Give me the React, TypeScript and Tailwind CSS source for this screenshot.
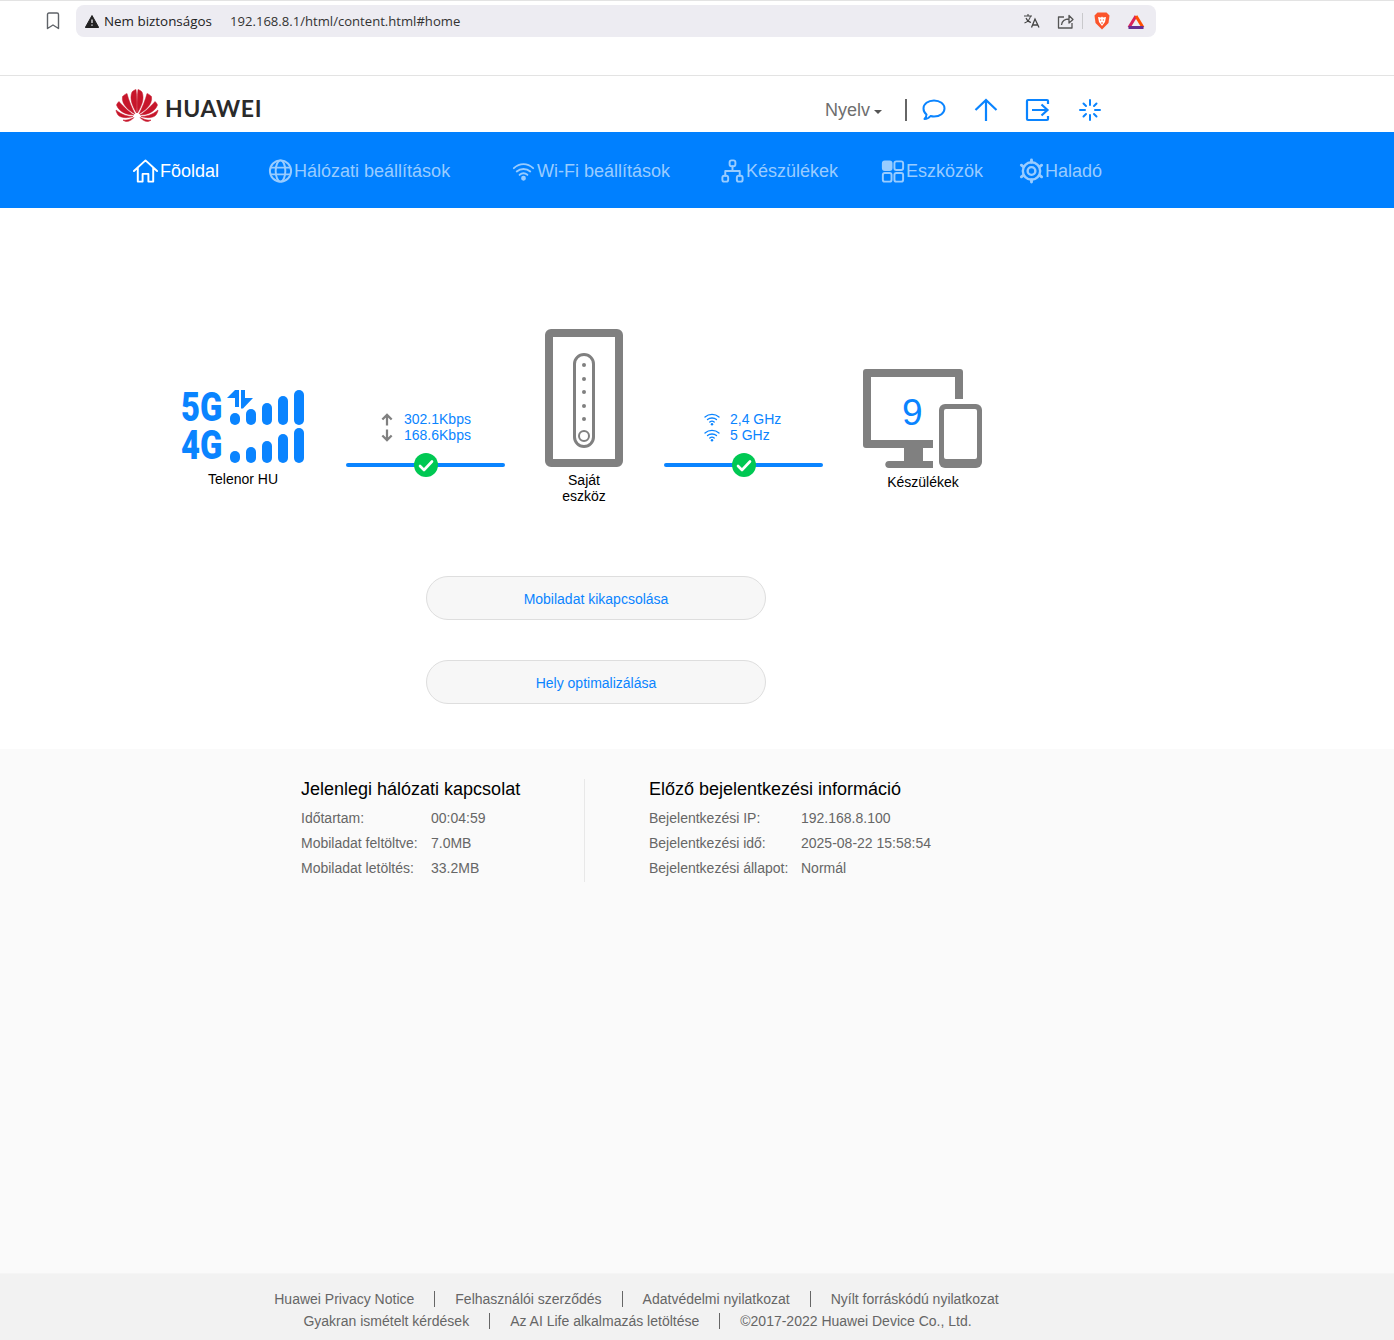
import React from 'react';

const blue = '#0a84ff';

const HuaweiLogo = () => (
  <svg width="44" height="34" viewBox="0 0 44 34" fill="#c7162b" stroke="#c7162b" strokeWidth="0.5">
    <path d="M17 3C19 1 20 1 21 0.5C22 8 22 17 21.6 24C18 18 14 10 17 3Z" />
    <path d="M27 3C25 1 24 1 23 0.5C22 8 22 17 22.4 24C26 18 30 10 27 3Z" />
    <path d="M7.5 7.5C9 6 10.500 5 12 4.500C13.500 11 17 19 20 25C15 22 6 16 7.500 7.500Z" />
    <path d="M36.500 7.500C35 6 33.500 5 32 4.500C30.500 11 27 19 24 25C29 22 38 16 36.500 7.500Z" />
    <path d="M1.500 16C2 14.500 3 13.500 4 12.500C7 16 13 22 19 26C12 26 4 23 1.500 16Z" />
    <path d="M42.500 16C42 14.500 41 13.500 40 12.500C37 16 31 22 25 26C32 26 40 23 42.500 16Z" />
    <path d="M1 21C7 26 13 27.500 18 27.500C14 29 6 29.500 3 26C2 24.500 1 22.500 1 21Z" />
    <path d="M43 21C37 26 31 27.500 26 27.500C30 29 38 29.500 41 26C42 24.500 43 22.500 43 21Z" />
    <path d="M8 31C11 31.500 15 30.500 19 28.500C16 32 11 34 8 31Z" />
    <path d="M36 31C33 31.500 29 30.500 25 28.500C28 32 33 34 36 31Z" />
  </svg>
);

const NavIcon = ({ children }: { children: React.ReactNode }) => (
  <svg width="27" height="26" viewBox="0 0 28 26" fill="none" stroke="currentColor" strokeWidth="2" strokeLinejoin="round" strokeLinecap="round">
    {children}
  </svg>
);

const navItems = [
  {
    label: 'Hálózati beállítások',
    cls: 'ml-[48px] w-[243px]',
    icon: (
      <>
        <circle cx="14" cy="13" r="11" />
        <ellipse cx="14" cy="13" rx="5" ry="11" />
        <path d="M4 9.500H24M4 16.500H24" />
      </>
    ),
  },
  {
    label: 'Wi-Fi beállítások',
    cls: 'w-[209px]',
    icon: (
      <>
        <path d="M4 10C10 4.500 18 4.500 24 10M7 13.500C11 10 17 10 21 13.500M10 17C12.500 15 15.500 15 18 17" />
        <circle cx="14" cy="20.500" r="1.500" fill="currentColor" />
      </>
    ),
  },
  {
    label: 'Készülékek',
    cls: 'w-[160px]',
    icon: (
      <>
        <rect x="11" y="2" width="6" height="6" rx="2" />
        <rect x="3.500" y="18" width="6" height="6" rx="2" />
        <rect x="18.500" y="18" width="6" height="6" rx="2" />
        <path d="M14 8V13M6.500 18V13H21.500V18" />
      </>
    ),
  },
  {
    label: 'Eszközök',
    cls: 'w-[139px]',
    icon: (
      <>
        <rect x="4" y="3" width="9" height="9" rx="2" fill="currentColor" />
        <rect x="16" y="3" width="9" height="9" rx="2" />
        <rect x="4" y="15" width="9" height="9" rx="2" />
        <rect x="16" y="15" width="9" height="9" rx="2" />
      </>
    ),
  },
  {
    label: 'Haladó',
    cls: '',
    icon: (
      <>
        <circle cx="14" cy="13" r="9" strokeWidth="2.500" />
        <circle cx="14" cy="13" r="4" strokeWidth="2.500" />
        <path d="M14 1.500V4M14 22V24.500M3.500 7L5.500 8.500M22.500 17.500L24.500 19M3.500 19L5.500 17.500M22.500 8.500L24.500 7" strokeWidth="3" />
      </>
    ),
  },
];

const SmallWifi = () => (
  <svg width="16" height="13" viewBox="0 0 16 13" fill="none" stroke={blue} strokeWidth="1.300" strokeLinecap="round">
    <path d="M1 4C5 0.500 11 0.500 15 4M3.500 6.500C6 4.500 10 4.500 12.500 6.500M5.800 9C7 8 9 8 10.200 9" />
    <circle cx="8" cy="11.300" r="1.200" fill={blue} stroke="none" />
  </svg>
);

const StatusLine = () => (
  <div className="relative ml-px h-1 w-[159px] rounded-full bg-[#0a84ff]">
    <div className="absolute left-[68px] top-[-10px] flex h-6 w-6 items-center justify-center rounded-full bg-[#00c853]">
      <svg width="16" height="13" viewBox="0 0 16 13" fill="none" stroke="#fff" strokeWidth="2.600" strokeLinecap="round" strokeLinejoin="round">
        <path d="M2 7L6 11L14 2.500" />
      </svg>
    </div>
  </div>
);

const Bars = () => (
  <div className="ml-px flex items-end gap-[6px]">
    <div className="h-[12px] w-[10px] rounded-full bg-[#0a84ff]" />
    <div className="h-[16px] w-[10px] rounded-full bg-[#0a84ff]" />
    <div className="h-[22px] w-[10px] rounded-full bg-[#0a84ff]" />
    <div className="h-[29px] w-[10px] rounded-full bg-[#0a84ff]" />
    <div className="h-[35px] w-[10px] rounded-full bg-[#0a84ff]" />
  </div>
);

const InfoRow = ({ label, value, w }: { label: string; value: string; w: string }) => (
  <div className="flex h-[25px] items-center text-sm text-[#666]">
    <span className={w}>{label}</span>
    <span>{value}</span>
  </div>
);

export default function App() {
  return (
    <div className="flex min-h-[1340px] flex-col bg-white font-['Liberation_Sans',Arial,sans-serif]">
      {/* browser bar */}
      <div className="h-[76px] border-y border-[#e3e3e3]">
        <div className="flex items-center pt-1">
          <svg className="ml-[46px]" width="14" height="18" viewBox="0 0 14 18" fill="none" stroke="#5f6368" strokeWidth="1.400" strokeLinejoin="round">
            <path d="M1.500 2.500C1.500 1.500 2 1 3 1H11C12 1 12.500 1.500 12.500 2.500V16.500L7 13L1.500 16.500Z" />
          </svg>
          <div className="ml-[16px] flex h-8 w-[1080px] items-center rounded-lg bg-[#edecf2] pl-[9px] font-['Open_Sans',sans-serif] text-[#3c3c43]">
            <svg width="14" height="13" viewBox="0 0 14 13">
              <path d="M7 0.500L13.700 12.500H0.300Z" fill="#222" stroke="#222" strokeLinejoin="round" />
              <path d="M7 4.500V8M7 9.500V10.800" stroke="#edecf2" strokeWidth="1.300" />
            </svg>
            <span className="ml-[5px] w-[126px] text-[13.4px] text-[#222]">Nem biztonságos</span>
            <span className="mt-[2px] text-[13.1px] text-[#333]">192.168.8.1/html/content.html#home</span>
            <div className="ml-auto flex items-center">
              <svg width="18" height="16" viewBox="0 0 18 16" fill="none" stroke="#444" strokeWidth="1.100">
                <path d="M1 3H9M5 1V3M7.500 3C7 6 4 9 1.500 10M3 5C4 7.500 6 9 8 9.500" />
                <path d="M8.500 14.500L12 6L16 14.500M10 12H14.500" strokeWidth="1.300" />
              </svg>
              <svg className="ml-[16px]" width="17" height="16" viewBox="0 0 17 16" fill="none" stroke="#555" strokeWidth="1.300" strokeLinejoin="round">
                <path d="M7 4H1.500V15H15V10" />
                <path d="M4.500 12C5 8 8 6 12 6V2.500L16 6.500L12 10V6" />
              </svg>
              <div className="ml-[8px] h-4 w-px bg-[#c9c9cc]" />
              <svg className="ml-[11px]" width="16" height="18" viewBox="0 0 16 18">
                <path d="M3.500 0.500H12.500L15.500 3.500L14.500 11L8 17.500L1.500 11L0.500 3.500Z" fill="#fb542b" />
                <path d="M4 5L7 5.500L8 4.500L9 5.500L12 5L11 10L8 14L5 10Z" fill="#fff" />
                <path d="M6 8H7.200M8.800 8H10M7 11H9" stroke="#fb542b" />
              </svg>
              <svg className="ml-[17px] mr-[11px]" width="18" height="16" viewBox="0 0 18 16" fill="none" strokeWidth="3">
                <path d="M9 3L2 14.500" stroke="#d9235c" />
                <path d="M9 3L16 14.500" stroke="#ff5000" />
                <path d="M1.500 14.500H16.500" stroke="#662d91" />
              </svg>
            </div>
          </div>
        </div>
      </div>

      {/* header */}
      <div className="flex h-[56px] items-center">
        <div className="ml-[115px] mt-[4px] flex items-center">
          <HuaweiLogo />
          <span className="ml-[6px] mt-[4px] font-['Lato',sans-serif] text-[23px] font-bold leading-none tracking-[0.6px] text-[#2a2a2a]">HUAWEI</span>
        </div>
        <div className="ml-[563px] mt-[12px] flex items-center">
          <span className="text-lg text-[#6e6e6e]">Nyelv</span>
          <div className="ml-[4px] mt-[3px] h-0 w-0 border-x-4 border-t-4 border-x-transparent border-t-[#555]" />
          <div className="ml-[23px] h-[22px] w-[2px] bg-[#666]" />
          <svg className="ml-[14px]" width="26" height="24" viewBox="0 0 26 24" fill="none" stroke={blue} strokeWidth="2" strokeLinejoin="round">
            <path d="M13 2.500C19 2.500 23.500 6 23.500 10.500C23.500 15 19 18.500 13 18.500C11.500 18.500 10.500 18.300 9.500 18C8 20 6 21 3.500 21C5 19.500 5.500 18 5.500 16.500C3.500 15 2.500 13 2.500 10.500C2.500 6 7 2.500 13 2.500Z" />
          </svg>
          <svg className="ml-[26px]" width="26" height="24" viewBox="0 0 26 24" fill="none" stroke={blue} strokeWidth="2.200">
            <path d="M13 23V2M2.500 12L13 2L23.500 12" />
          </svg>
          <svg className="ml-[26px]" width="26" height="24" viewBox="0 0 26 24" fill="none" stroke={blue} strokeWidth="2.200">
            <path d="M23 6V3C23 2 22.500 2 22 2H3C2 2 2 2.500 2 3V21C2 21.500 2 22 3 22H22C22.500 22 23 22 23 21V18" />
            <path d="M7 12H22M16.500 6.500L22.500 12L16.500 17.500" />
          </svg>
          <svg className="ml-[26px]" width="26" height="24" viewBox="0 0 26 24" fill="none" stroke={blue} strokeWidth="2" strokeLinecap="round">
            <path d="M13 2V7M13 17V22M3 12H8M18 12H23M6.500 5.500L9 8M17 16L19.500 18.500M6.500 18.500L9 16M17 8L19.500 5.500" />
          </svg>
        </div>
      </div>

      {/* nav */}
      <div className="flex h-[76px] items-center bg-[#0080ff] pt-[2px] text-lg">
        <div className="ml-[132px] flex items-center text-white">
          <NavIcon>
            <path d="M2 13L14 2L26 13M6 10V24H11V16H17V24H22V10" />
          </NavIcon>
          <span className="ml-px">Fõoldal</span>
        </div>
        {navItems.map((item) => (
          <div key={item.label} className={`flex items-center text-[#99ccff] ${item.cls}`}>
            <NavIcon>{item.icon}</NavIcon>
            <span>{item.label}</span>
          </div>
        ))}
      </div>

      {/* diagram */}
      <div className="ml-[181px] mt-[121px] flex h-[175px] items-start">
        <div className="mt-[61px] flex w-[124px] flex-col items-center">
          <div className="flex w-[124px] flex-col gap-[3px]">
            <div className="relative flex h-[35px] items-end">
              <span className="w-[48px] origin-left font-['Roboto',sans-serif] text-[41px] font-black leading-[35px] text-[#0a84ff] [transform:scaleX(0.8)]">5G</span>
              <Bars />
              <svg className="absolute left-[45px] top-0" width="28" height="19" viewBox="0 0 28 19" fill={blue}>
                <path d="M9 0H13V17H9V8H1Z" />
                <path d="M15 0H19V8H27L17 18.500H15Z" />
              </svg>
            </div>
            <div className="flex h-[35px] items-end">
              <span className="w-[48px] origin-left pt-px font-['Roboto',sans-serif] text-[41px] font-black leading-[35px] text-[#0a84ff] [transform:scaleX(0.8)]">4G</span>
              <Bars />
            </div>
          </div>
          <span className="mt-[8px] text-sm leading-4 text-black">Telenor HU</span>
        </div>
        <div className="ml-[40px] mt-[82px] flex w-40 flex-col">
          <div className="ml-[34px] flex flex-col text-sm leading-4 text-[#0a84ff]">
            <div className="flex items-center">
              <svg className="ml-px" width="14" height="15" viewBox="0 0 15 15" fill="none" stroke="#808080" strokeWidth="2.400"><path d="M7.500 14V2.500M2.500 7.500L7.500 2.500L12.500 7.500" /></svg>
              <span className="ml-[10px]">302.1Kbps</span>
            </div>
            <div className="flex items-center">
              <svg className="ml-px" width="14" height="15" viewBox="0 0 15 15" fill="none" stroke="#808080" strokeWidth="2.400"><path d="M7.500 1V12.500M2.500 7.500L7.500 12.500L12.500 7.500" /></svg>
              <span className="ml-[10px]">168.6Kbps</span>
            </div>
          </div>
          <div className="mt-[20px]"><StatusLine /></div>
        </div>
        <div className="ml-[40px] flex w-[78px] flex-col items-center">
          <div className="flex h-[138px] w-[78px] items-center justify-center rounded-[6px] border-[8px] border-[#808080]">
            <div className="mt-[5px] flex h-[95px] w-[22px] flex-col items-center rounded-full border-[3px] border-[#808080] pt-[7px]">
              <div className="flex flex-col gap-[9.500px]">
                <div className="h-1 w-1 rounded-full bg-[#808080]" />
                <div className="h-1 w-1 rounded-full bg-[#808080]" />
                <div className="h-1 w-1 rounded-full bg-[#808080]" />
                <div className="h-1 w-1 rounded-full bg-[#808080]" />
                <div className="h-1 w-1 rounded-full bg-[#808080]" />
              </div>
              <div className="mt-[9px] h-3 w-3 rounded-full border-2 border-[#808080]" />
            </div>
          </div>
          <span className="mt-[5px] w-[78px] text-center text-sm leading-4 text-black">Saját eszköz</span>
        </div>
        <div className="ml-[40px] mt-[82px] flex w-40 flex-col">
          <div className="ml-[41px] flex flex-col text-sm leading-4 text-[#0a84ff]">
            <div className="flex items-center"><SmallWifi /><span className="ml-[10px]">2,4 GHz</span></div>
            <div className="flex items-center"><SmallWifi /><span className="ml-[10px]">5 GHz</span></div>
          </div>
          <div className="mt-[20px]"><StatusLine /></div>
        </div>
        <div className="ml-[40px] mt-[40px] flex w-[120px] flex-col items-center">
          <div className="relative h-[100px] w-[120px]">
            <svg width="120" height="100" viewBox="0 0 120 100">
              <path d="M3 0H97C99 0 100 1 100 3V30H92V8H8V71H70V79H60V92H70V99H26C21 99 21 92 26 92H41V79H3C1 79 0 78 0 76V3C0 1 1 0 3 0Z" fill="#808080" />
              <rect x="76" y="35" width="43" height="64" rx="6" fill="#808080" />
              <rect x="81" y="40" width="33" height="50" rx="2" fill="#fff" />
            </svg>
            <span className="absolute left-[39px] top-[25px] text-[37px] leading-none text-[#0a84ff]">9</span>
          </div>
          <span className="mt-[5px] text-sm leading-4 text-black">Készülékek</span>
        </div>
      </div>

      {/* buttons */}
      <div className="ml-[426px] mt-[72px] flex flex-col gap-10">
        <div className="flex h-[44px] w-[340px] items-center justify-center rounded-full border border-[#dedede] bg-[#f7f7f7] pt-[2px] text-sm text-[#0a84ff]">Mobiladat kikapcsolása</div>
        <div className="flex h-[44px] w-[340px] items-center justify-center rounded-full border border-[#dedede] bg-[#f7f7f7] pt-[2px] text-sm text-[#0a84ff]">Hely optimalizálása</div>
      </div>

      {/* info */}
      <div className="mt-[45px] flex-1 bg-[#fafafa] pl-[301px] pt-[30px]">
        <div className="flex">
          <div className="w-[284px] border-r border-[#e8e8e8] pb-[2px]">
            <div className="mb-[6px] text-lg leading-5 text-black">Jelenlegi hálózati kapcsolat</div>
            <InfoRow label="Időtartam:" value="00:04:59" w="w-[130px]" />
            <InfoRow label="Mobiladat feltöltve:" value="7.0MB" w="w-[130px]" />
            <InfoRow label="Mobiladat letöltés:" value="33.2MB" w="w-[130px]" />
          </div>
          <div className="ml-[64px]">
            <div className="mb-[6px] text-lg leading-5 text-black">Előző bejelentkezési információ</div>
            <InfoRow label="Bejelentkezési IP:" value="192.168.8.100" w="w-[152px]" />
            <InfoRow label="Bejelentkezési idő:" value="2025-08-22 15:58:54" w="w-[152px]" />
            <InfoRow label="Bejelentkezési állapot:" value="Normál" w="w-[152px]" />
          </div>
        </div>
      </div>

      {/* footer */}
      <div className="flex h-[67px] flex-col items-center border-t border-[#f5f5f5] bg-[#f2f2f2] pr-[121px] pt-[14px] text-sm text-[#666]">
        <div className="flex h-[22px] items-center">
          <span>Huawei Privacy Notice</span>
          <div className="mx-5 h-4 w-px bg-[#666]" />
          <span>Felhasználói szerződés</span>
          <div className="mx-5 h-4 w-px bg-[#666]" />
          <span>Adatvédelmi nyilatkozat</span>
          <div className="mx-5 h-4 w-px bg-[#666]" />
          <span>Nyílt forráskódú nyilatkozat</span>
        </div>
        <div className="ml-[2px] flex h-[22px] items-center">
          <span>Gyakran ismételt kérdések</span>
          <div className="mx-5 h-4 w-px bg-[#666]" />
          <span>Az AI Life alkalmazás letöltése</span>
          <div className="mx-5 h-4 w-px bg-[#666]" />
          <span>©2017-2022 Huawei Device Co., Ltd.</span>
        </div>
      </div>
    </div>
  );
}
